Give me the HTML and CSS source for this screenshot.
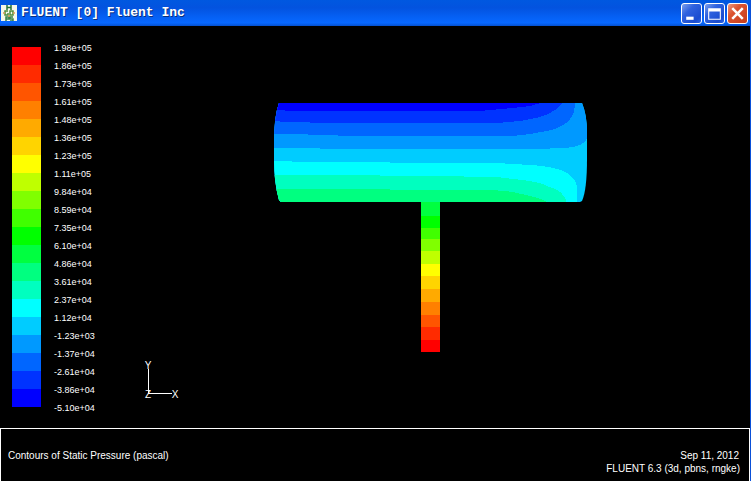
FILE: index.html
```html
<!DOCTYPE html>
<html lang="en">
<head>
<meta charset="utf-8">
<title>FLUENT [0] Fluent Inc</title>
<link rel="stylesheet" href="styles.css">
</head>
<body>
<div class="window">
  <header class="titlebar">
    <svg class="app-icon" viewBox="0 0 16 16" aria-hidden="true">
      <rect width="16" height="16" fill="#f4f7ea"/>
      <g fill="none" stroke-width="1.5">
        <path d="M6 0v5M10 0v5M6 2.500h4" stroke="#26733a"/>
        <path d="M7 6H4v4h3V8M9 6h3v4H9z" stroke="#4c8c3c"/>
        <path d="M5 16v-4h3v2H5M12 12H9v2h3v2H9" stroke="#358349"/>
        <path d="M2 8h2M12 8h2M7 11h2" stroke="#d69a58"/>
      </g>
    </svg>
    <h1 class="title">FLUENT [0] Fluent Inc</h1>
    <div class="controls">
      <button class="control" type="button" aria-label="Minimize"><svg viewBox="0 0 18 18"><path d="M4 12h7v3H4z" fill="#fff"/></svg></button>
      <button class="control" type="button" aria-label="Maximize"><svg viewBox="0 0 18 18"><path d="M3 4h12v11H3zM4 7v7h10V7z" fill="#fff" fill-rule="evenodd"/></svg></button>
      <button class="control close" type="button" aria-label="Close"><svg viewBox="0 0 18 18"><path d="M4 4l10 10M14 4L4 14" stroke="#fff" stroke-width="2.400"/></svg></button>
    </div>
  </header>
  <main class="view">
    <div class="scale" aria-hidden="true">
      <i class="c1"></i><i class="c2"></i><i class="c3"></i><i class="c4"></i><i class="c5"></i>
      <i class="c6"></i><i class="c7"></i><i class="c8"></i><i class="c9"></i><i class="c10"></i>
      <i class="c11"></i><i class="c12"></i><i class="c13"></i><i class="c14"></i><i class="c15"></i>
      <i class="c16"></i><i class="c17"></i><i class="c18"></i><i class="c19"></i><i class="c20"></i>
    </div>
    <ul class="values">
      <li>1.98e+05</li><li>1.86e+05</li><li>1.73e+05</li><li>1.61e+05</li><li>1.48e+05</li>
      <li>1.36e+05</li><li>1.23e+05</li><li>1.11e+05</li><li>9.84e+04</li><li>8.59e+04</li>
      <li>7.35e+04</li><li>6.10e+04</li><li>4.86e+04</li><li>3.61e+04</li><li>2.37e+04</li>
      <li>1.12e+04</li><li>-1.23e+03</li><li>-1.37e+04</li><li>-2.61e+04</li><li>-3.86e+04</li>
      <li>-5.10e+04</li>
    </ul>
    <svg class="plot" viewBox="110 26 640 402" role="img" aria-label="Contours of static pressure">
      <defs>
        <clipPath id="tank"><path d="M279 103H582Q587 115 587 132V159Q587 190 582 201L580 202H281L279 200Q274 182 274 160V142Q274 117 279 103Z"/></clipPath>
      </defs>
      <g clip-path="url(#tank)" shape-rendering="crispEdges">
        <path fill="#0cf" d="M270 100H590V205H270z"/>
        <path fill="#09f" d="M270 100V148H305L335 149H530Q546 149 557 148Q571 148 577 146Q587 143 587 136V100Z"/>
        <path fill="#06f" d="M270 100V134H290L325 135L350 136H513L530 134L547 131Q559 128 563 125Q571 120 573 114Q575 110 575 100Z"/>
        <path fill="#03f" d="M270 100V121L290 122L330 123H497L520 121L540 117Q549 114 553 111Q559 108 562 103V100Z"/>
        <path fill="#00f" d="M270 100V109L290 111H480L513 108L530 106L541 103V100Z"/>
        <path fill="#0ff" d="M270 205V161H284L300 162H380L400 163H497L530 165Q546 166 553 168Q563 170 567 173Q573 177 575 181Q577 185 577 190V205Z"/>
        <path fill="#00ffbf" d="M270 205V175H330L430 176L497 177L530 181Q541 183 547 186Q556 189 560 192Q566 197 567 205Z"/>
        <path fill="#00ff80" d="M270 205V189H350L430 190H480Q500 190 513 192L530 196Q540 198 547 202V205Z"/>
      </g>
      <g shape-rendering="crispEdges">
        <path fill="#00ff40" d="M421 202h19v14h-19z"/>
        <path fill="#0f0" d="M421 216h19v12h-19z"/>
        <path fill="#40ff00" d="M421 228h19v11h-19z"/>
        <path fill="#80ff00" d="M421 239h19v12h-19z"/>
        <path fill="#bfff00" d="M421 251h19v13h-19z"/>
        <path fill="#ff0" d="M421 264h19v12h-19z"/>
        <path fill="#ffd400" d="M421 276h19v13h-19z"/>
        <path fill="#fa0" d="M421 289h19v13h-19z"/>
        <path fill="#ff8000" d="M421 302h19v13h-19z"/>
        <path fill="#f50" d="M421 315h19v12h-19z"/>
        <path fill="#ff2b00" d="M421 327h19v13h-19z"/>
        <path fill="red" d="M421 340h19v12h-19z"/>
      </g>
      <path d="M148 369h1v24h23v1h-24z" fill="#fff" shape-rendering="crispEdges"/>
      <g class="axis">
        <text x="148" y="369">Y</text>
        <text x="175" y="398">X</text>
        <text x="148" y="398">Z</text>
      </g>
    </svg>
  </main>
  <footer class="caption">
    <p>Contours of Static Pressure (pascal)</p>
    <p class="stamp"><span class="date">Sep 11, 2012</span><span>FLUENT 6.3 (3d, pbns, rngke)</span></p>
  </footer>
</div>
</body>
</html>
```
FILE: styles.css
```css
* { box-sizing: border-box; }

body {
  margin: 0;
  background: #000;
  color: #fff;
  font-family: "Liberation Sans", Arial, sans-serif;
}

.window {
  display: flex;
  flex-direction: column;
  min-height: 100vh;
  border-right: 1px solid #0a50d8;
}

.titlebar {
  display: flex;
  align-items: center;
  gap: 4px;
  height: 26px;
  padding: 0 2px 0 1px;
  background: linear-gradient(#0058e0 0, #0353df 30%, #0560f4 65%, #0768ff 88%, #0450cf 100%);
}

.app-icon { width: 16px; height: 16px; }

.title {
  flex: 1;
  margin: 0;
  font: bold 13px/20px "Liberation Mono", "Courier New", monospace;
  text-shadow: 1px 1px 0 #09307c;
}

.controls { display: flex; gap: 2px; }

.control {
  width: 21px;
  height: 21px;
  padding: 0;
  border: 1px solid #fff;
  border-radius: 3px;
  background: linear-gradient(135deg, #7da0ec, #2f62df 35%, #1a4cd0 80%, #2c66ea);
}

.control svg { display: block; width: 19px; height: 19px; }

.close { background: linear-gradient(135deg, #ee9a80, #dc5431 35%, #c53d1b); }

.view {
  flex: 1;
  display: flex;
  align-items: stretch;
}

.scale {
  display: grid;
  grid-auto-rows: 18px;
  align-content: start;
  width: 29px;
  margin: 21px 13px 0 12px;
}

.c1 { background: #ff0000; }
.c2 { background: #ff2b00; }
.c3 { background: #ff5500; }
.c4 { background: #ff8000; }
.c5 { background: #ffaa00; }
.c6 { background: #ffd400; }
.c7 { background: #ffff00; }
.c8 { background: #bfff00; }
.c9 { background: #80ff00; }
.c10 { background: #40ff00; }
.c11 { background: #00ff00; }
.c12 { background: #00ff40; }
.c13 { background: #00ff80; }
.c14 { background: #00ffbf; }
.c15 { background: #00ffff; }
.c16 { background: #00ccff; }
.c17 { background: #0099ff; }
.c18 { background: #0066ff; }
.c19 { background: #0033ff; }
.c20 { background: #0000ff; }

.values {
  width: 56px;
  margin: 13px 0 0;
  padding: 0;
  list-style: none;
  font-size: 9px;
  line-height: 18px;
}

.plot { flex: 1; min-width: 0; }

.axis { fill: #fff; font-size: 10px; text-anchor: middle; }

.caption {
  display: flex;
  justify-content: space-between;
  padding: 20px 9px 6px 7px;
  border: 1px solid #fff;
  border-bottom: 0;
  font-size: 10px;
  line-height: 13px;
}

.caption p { margin: 0; }

.stamp { display: flex; flex-direction: column; align-items: flex-end; }

.date { padding-right: 1px; }
```
